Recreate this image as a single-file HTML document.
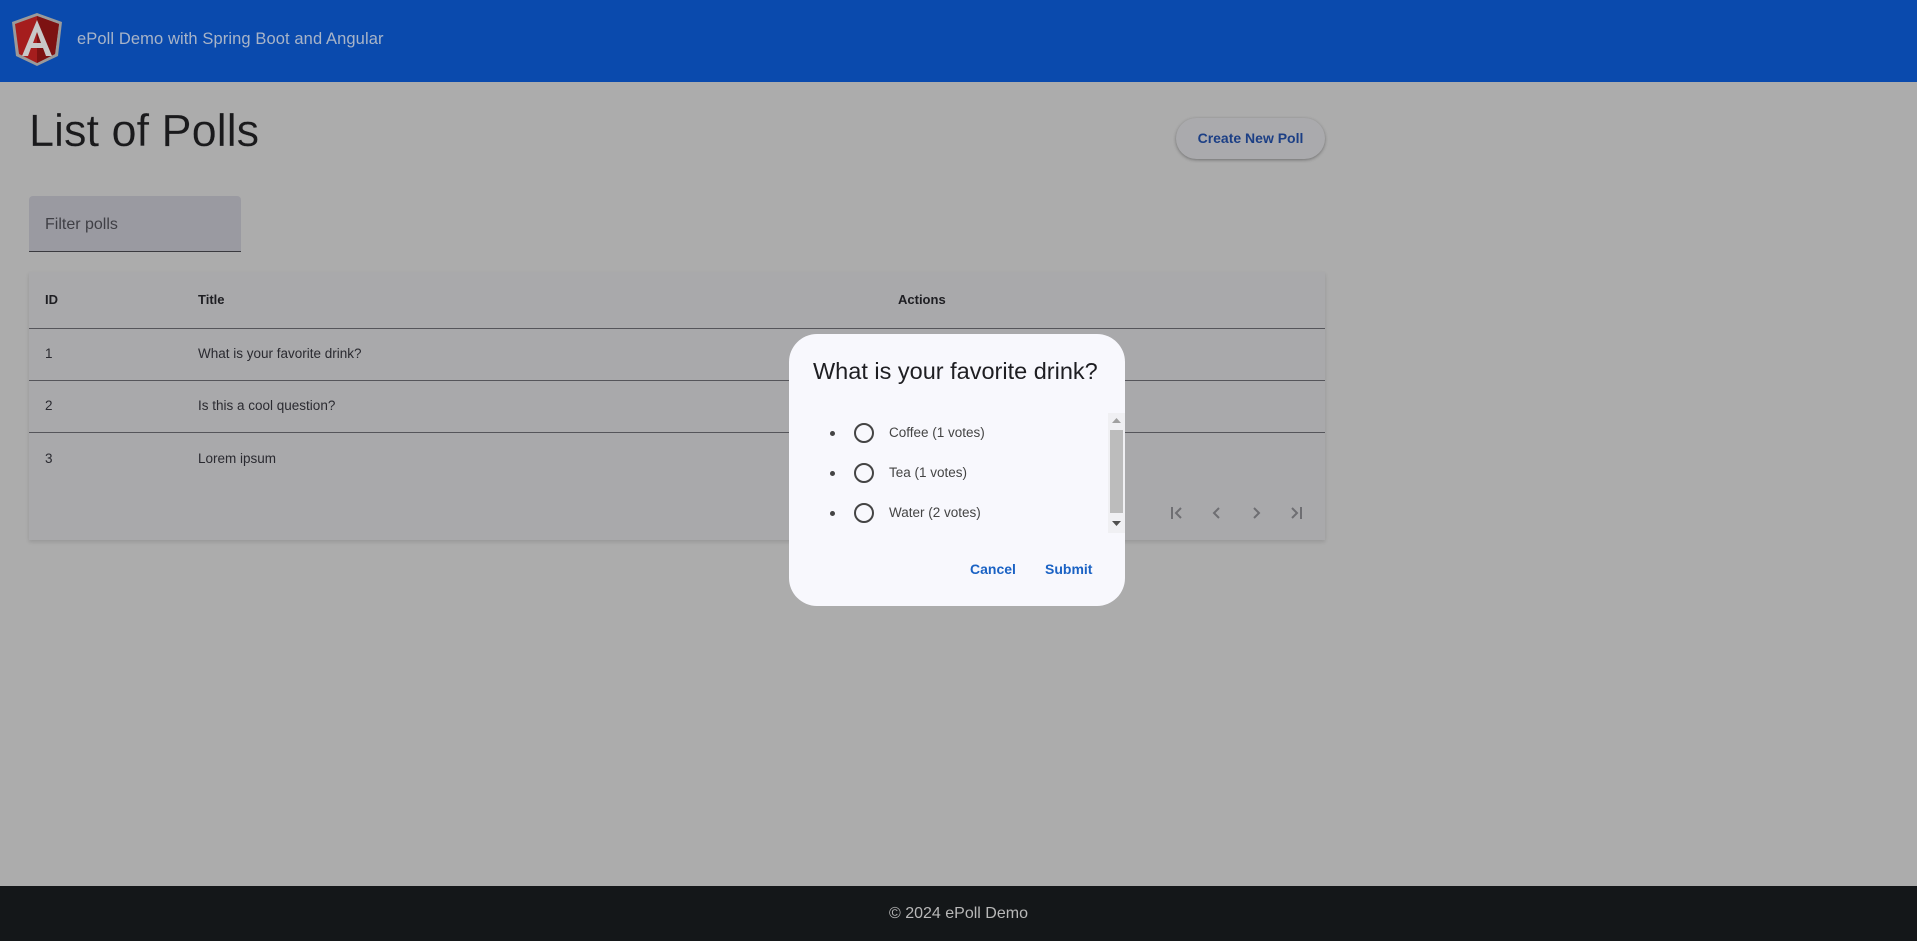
<!DOCTYPE html>
<html><head><meta charset="utf-8">
<style>
*{box-sizing:border-box;margin:0;padding:0}
body{width:1917px;height:941px;overflow:hidden;background:#acacac;font-family:"Liberation Sans",Roboto,sans-serif;position:relative;color:#1b1b1f}
.hdr{position:absolute;left:0;top:0;width:1917px;height:82px;background:#0a4aad}
.hdr .t{position:absolute;left:77px;top:30px;font-size:16.5px;color:#a8b4c8;letter-spacing:.1px}
.h1{position:absolute;left:29px;top:105px;font-size:45px;color:#1a1a1c;-webkit-text-stroke:0.2px #acacac}
.btn{position:absolute;left:1176px;top:118px;width:149px;height:41px;border-radius:21px;background:#aaaaad;box-shadow:0 1px 3px rgba(0,0,0,.35);color:#1c3f85;font-size:14px;font-weight:600;text-align:center;line-height:41px}
.filter{position:absolute;left:29px;top:196px;width:212px;height:56px;background:#9a9aa1;border-radius:4px 4px 0 0;border-bottom:1px solid #3a3a3f}
.filter span{position:absolute;left:16px;top:20px;font-size:16px;color:#3f3f45}
.tbl{position:absolute;left:29px;top:272px;width:1296px;height:268px;background:#a9a9ab;box-shadow:0 2px 4px rgba(0,0,0,.12)}
.row{position:absolute;left:0;width:1296px;border-bottom:1px solid #55555a}
.c{position:absolute;font-size:13.5px;color:#2a2a30}
.hdrc{font-weight:bold;font-size:13px;color:#1e1e22}
.pg{position:absolute;top:505px}
.ftr{position:absolute;left:0;top:886px;width:1917px;height:55px;background:#141719;color:#b8b8b8;text-align:center;font-size:16px;line-height:55px}
.dlg{position:absolute;left:789px;top:334px;width:336px;height:272px;background:#f8f8fd;border-radius:28px}
.dlg .ti{position:absolute;left:24px;top:24px;font-size:23.5px;color:#1e1e22}
.bul{position:absolute;left:41px;width:5px;height:5px;border-radius:50%;background:#444}
.rad{position:absolute;left:65px;width:20px;height:20px;border:2px solid #444;border-radius:50%}
.lbl{position:absolute;left:100px;font-size:13.5px;color:#444}
.sb{position:absolute;left:319px;top:79px;width:17px;height:120px;background:#f0f0f3}
.thumb{position:absolute;left:2px;top:17px;width:13px;height:83px;background:#bcbcbc}
.act{position:absolute;top:227px;font-size:14px;font-weight:600;color:#1a62c4}
</style></head><body>
<div class="hdr">
<svg style="position:absolute;left:12px;top:13px" width="50" height="53" viewBox="0 0 50 53">
<polygon points="25,0 50,9 46,43 25,53 4,43 0,9" fill="#9a9a9a"/>
<polygon points="25,3 47,11 43,41 25,50 7,41 3,11" fill="#a51d1d"/>
<polygon points="25,3 47,11 43,41 25,50" fill="#7d1212"/>
<path d="M25 7 L10 43 H16 L19 35 H31 L34 43 H40 Z M21 30 L25 19 L29 30 Z" fill="#c8c8c8" fill-rule="evenodd"/>
</svg>
<div class="t">ePoll Demo with Spring Boot and Angular</div>
</div>
<div class="h1">List of Polls</div>
<div class="btn">Create New Poll</div>
<div class="filter"><span>Filter polls</span></div>
<div class="tbl">
<div class="row" style="top:0;height:57px"></div>
<div class="c hdrc" style="left:16px;top:20px">ID</div>
<div class="c hdrc" style="left:169px;top:20px">Title</div>
<div class="c hdrc" style="left:869px;top:20px">Actions</div>
<div class="row" style="top:57px;height:52px"></div>
<div class="c" style="left:16px;top:74px">1</div>
<div class="c" style="left:169px;top:74px">What is your favorite drink?</div>
<div class="row" style="top:109px;height:52px"></div>
<div class="c" style="left:16px;top:126px">2</div>
<div class="c" style="left:169px;top:126px">Is this a cool question?</div>
<div class="c" style="left:16px;top:179px">3</div>
<div class="c" style="left:169px;top:179px">Lorem ipsum</div>
</div>
<svg class="pg" style="left:1165px" width="150" height="16" viewBox="0 0 150 16" fill="none" stroke="#6e6e72" stroke-width="2">
<path d="M7 2V14 M16 3L11 8L16 13"/>
<path d="M54 3L49 8L54 13"/>
<path d="M89 3L94 8L89 13"/>
<path d="M127 3L132 8L127 13 M136 2V14"/>
</svg>
<div class="dlg">
<div class="ti">What is your favorite drink?</div>
<div class="bul" style="top:97px"></div><div class="rad" style="top:89px"></div><div class="lbl" style="top:91px">Coffee (1 votes)</div>
<div class="bul" style="top:137px"></div><div class="rad" style="top:129px"></div><div class="lbl" style="top:131px">Tea (1 votes)</div>
<div class="bul" style="top:177px"></div><div class="rad" style="top:169px"></div><div class="lbl" style="top:171px">Water (2 votes)</div>
<div class="sb"><div class="thumb"></div>
<svg style="position:absolute;left:4px;top:5px" width="9" height="6"><polygon points="4.5,0 9,5 0,5" fill="#a0a0a0"/></svg>
<svg style="position:absolute;left:4px;top:108px" width="9" height="6"><polygon points="0,0 9,0 4.5,5" fill="#505050"/></svg>
</div>
<div class="act" style="left:181px">Cancel</div>
<div class="act" style="left:256px">Submit</div>
</div>
<div class="ftr">© 2024 ePoll Demo</div>
</body></html>
